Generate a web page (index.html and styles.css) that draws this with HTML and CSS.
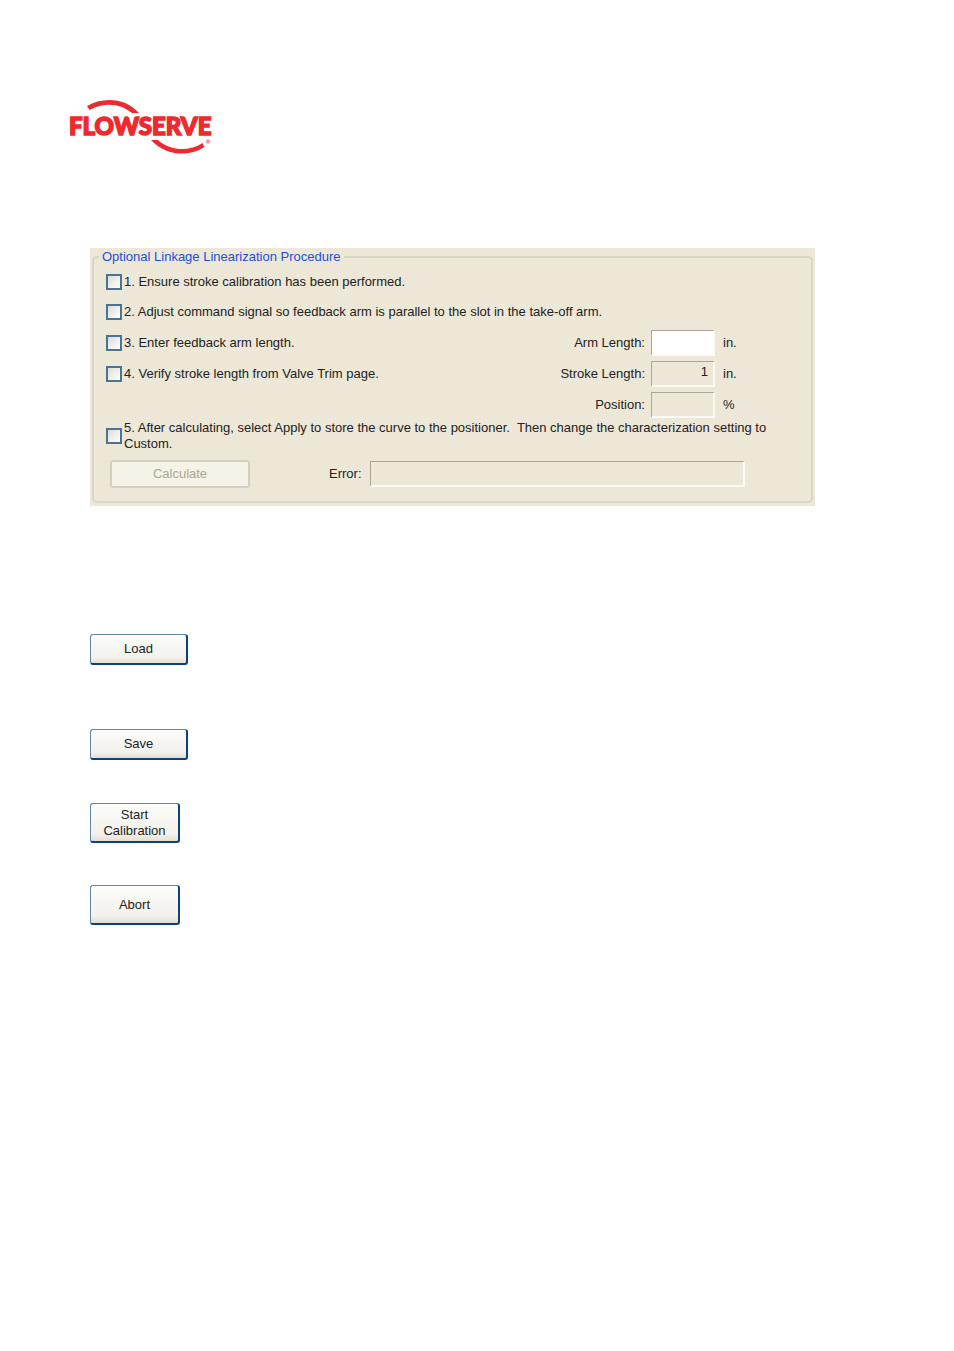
FILE: index.html
```
<!doctype html>
<html lang="en">
<head>
    <meta charset="UTF-8">
    <meta name="viewport" content="width=device-width, initial-scale=1.0">
    <title>Flowserve - Linkage Linearization</title>
    <link rel="stylesheet" href="styles.css">
</head>
<body>
<header class="header">
    <svg class="logo" viewBox="0 0 150 58" role="img" aria-label="Flowserve">
        <path class="arc" d="M18 8 C33 -1 56 -1 70 15 L63 15 C51 5 35 4 20.500 12 Z"/>
        <text class="wordmark" x="0" y="37">FLOWSERVE</text>
        <path class="arc" d="M82 42 L89 42 C101 53 120 54 133.500 45 L135.500 49 C118 60 96 57 82 42 Z"/>
        <circle class="mark" cx="139" cy="43.500" r="1.700"/>
        <text class="mark-letter" x="138" y="44.500">R</text>
    </svg>
</header>

<main class="main">
    <form class="panel">
        <fieldset class="group">
            <legend>Optional Linkage Linearization Procedure</legend>
            <div class="steps">
                <label class="step"><input type="checkbox" class="check">1. Ensure stroke calibration has been performed.</label>
                <label class="step"><input type="checkbox" class="check">2. Adjust command signal so feedback arm is parallel to the slot in the take-off arm.</label>

                <div class="row">
                    <label class="step"><input type="checkbox" class="check">3. Enter feedback arm length.</label>
                    <label class="name" for="arm">Arm Length:</label>
                    <input type="text" class="field" id="arm">
                    <span class="unit">in.</span>
                </div>
                <div class="row">
                    <label class="step"><input type="checkbox" class="check">4. Verify stroke length from Valve Trim page.</label>
                    <label class="name" for="stroke">Stroke Length:</label>
                    <input type="text" class="field readonly" id="stroke" value="1" readonly>
                    <span class="unit">in.</span>
                </div>
                <div class="row">
                    <label class="name" for="position">Position:</label>
                    <input type="text" class="field readonly" id="position" readonly>
                    <span class="unit">%</span>
                </div>

                <label class="step last"><input type="checkbox" class="check"><span>5. After calculating, select Apply to store the curve to the positioner.&nbsp; Then change the characterization setting to Custom.</span></label>
            </div>
            <div class="result">
                <button type="button" class="calculate" disabled>Calculate</button>
                <label class="name" for="error">Error:</label>
                <input type="text" class="field readonly error" id="error" readonly>
            </div>
        </fieldset>
    </form>

    <div class="actions">
        <button type="button" class="button load">Load</button>
        <button type="button" class="button save">Save</button>
        <button type="button" class="button tall start">Start<br>Calibration</button>
        <button type="button" class="button tall">Abort</button>
    </div>
</main>
</body>
</html>
```
FILE: styles.css
```
*
{
    box-sizing: border-box;
}
body
{
    margin: 0;
    background-color: #ffffff;
    color: #222222;
    font-family: "Liberation Sans", Arial, sans-serif;
    font-size: 13px;
    line-height: 16px;
}
input, button
{
    margin: 0;
    font: inherit;
    color: inherit;
}
.header
{
    padding: 98px 69px 0;
}
.logo
{
    display: block;
    width: 150px;
    height: 58px;
    overflow: visible;
}
.arc
{
    fill: #ee2a2f;
}
.wordmark
{
    fill: #ee2a2f;
    stroke: #ee2a2f;
    stroke-width: 1.5;
    font-family: Lato, sans-serif;
    font-size: 24px;
    font-weight: 900;
}
.mark
{
    fill: none;
    stroke: #ee2a2f;
    stroke-width: 0.5;
}
.mark-letter
{
    fill: #ee2a2f;
    font-size: 3px;
}
.main
{
    padding: 92px 139px 0 90px;
}
.panel
{
    padding: 1px 2px 3px;
    background-color: #ece7d7;
}
.group
{
    min-width: 0;
    margin: 0;
    padding: 2px 12px 13px;
    border: 2px solid #d6d7c4;
    border-radius: 5px;
}
.group legend
{
    margin-left: -7px;
    padding: 0 3px;
    color: #1c50d8;
}
.step
{
    display: flex;
    align-items: center;
    gap: 2px;
    height: 30px;
}
.check
{
    appearance: none;
    flex: none;
    width: 16px;
    height: 16px;
    border: 2px solid #4a7396;
    background: linear-gradient(135deg, #dcdcd7, #ffffff);
}
.check:checked
{
    background: #21a121;
}
.row
{
    display: flex;
    align-items: center;
    height: 31px;
}
.name
{
    margin-left: auto;
    margin-right: 6px;
}
.field
{
    width: 64px;
    height: 26px;
    padding: 0 5px 4px;
    border: 1px solid;
    border-color: #aaa595 #fbfaf5 #fbfaf5 #aaa595;
    border-right-width: 2px;
    border-bottom-width: 2px;
    border-radius: 0;
    background-color: #ffffff;
    text-align: right;
}
.readonly
{
    background-color: #ece7d7;
}
.unit
{
    width: 84px;
    padding-left: 8px;
}
.last
{
    height: 32px;
    margin-right: 24px;
}
.result
{
    display: flex;
    align-items: center;
    margin-top: 8px;
    padding: 0 54px 0 4px;
}
.calculate
{
    width: 140px;
    height: 28px;
    border: 2px solid #d3d0c0;
    border-radius: 3px;
    background-color: #f5f2e7;
    color: #aaa697;
}
.result .name
{
    margin-left: 79px;
    margin-right: 8px;
}
.error
{
    flex: 1;
    text-align: left;
}
.actions
{
    display: flex;
    flex-direction: column;
    align-items: flex-start;
    padding-top: 128px;
}
.button
{
    width: 98px;
    height: 31px;
    padding: 0;
    border: 1px solid #5f87a6;
    border-right: 2px solid #0e417c;
    border-bottom: 2px solid #0e417c;
    border-radius: 3px;
    background: linear-gradient(#fcfcfa, #f2f1eb 80%, #e2dfd5);
}
.tall
{
    width: 90px;
    height: 40px;
}
.load
{
    margin-bottom: 64px;
}
.save
{
    margin-bottom: 43px;
}
.start
{
    margin-bottom: 42px;
}
```
